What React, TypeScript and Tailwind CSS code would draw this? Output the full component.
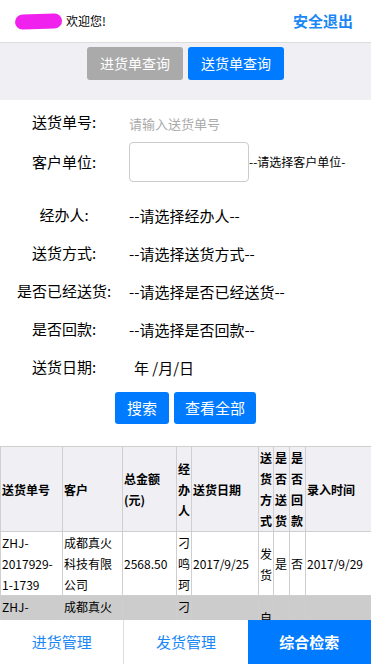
import React from "react";

const FONT = { fontFamily: '"Noto Sans CJK SC", "Liberation Sans", sans-serif' };

const FORM_ROWS = [
  { label: "经办人:", value: "--请选择经办人--" },
  { label: "送货方式:", value: "--请选择送货方式--" },
  { label: "是否已经送货:", value: "--请选择是否已经送货--" },
  { label: "是否回款:", value: "--请选择是否回款--" },
];

const COLS = [62, 60, 54, 15, 67, 15, 16, 16, 66];

const HEADERS = ["送货单号", "客户", "总金额(元)", "经办人", "送货日期", "送货方式", "是否送货", "是否回款", "录入时间"];

const ROWS = [
  ["ZHJ-2017929-1-1739", "成都真火科技有限公司", "2568.50", "刁鸣珂", "2017/9/25", "发货", "是", "否", "2017/9/29"],
  ["ZHJ-2017929-1-1740", "成都真火科技有限公司", "1320.00", "刁鸣珂", "2017/9/26", "自提", "是", "否", "2017/9/29"],
];

function FormRow({ label, children, className = "h-[38px]" }: { label: string; children: React.ReactNode; className?: string }) {
  return (
    <div className={`grid grid-cols-[128px_1fr] items-center ${className}`}>
      <div className="text-center text-[15px] text-black">{label}</div>
      <div className="min-w-0">{children}</div>
    </div>
  );
}

export default function App() {
  return (
    <div className="w-[371px] bg-white pb-[44px]" style={FONT}>
      {/* Header */}
      <div className="flex h-[43px] items-center justify-between border-b border-[#dcdcdc] bg-white pl-[15px] pr-[18px]">
        <div className="flex items-center">
          <span className="inline-block h-[15px] w-[47px] -rotate-2 rounded-full bg-[#f020ee]" />
          <span className="ml-[4px] text-[12px] text-black">欢迎您!</span>
        </div>
        <span className="text-[15px] font-bold text-[#1a87f5]">安全退出</span>
      </div>

      {/* Tabs */}
      <div className="flex h-[57px] justify-center gap-[5px] bg-[#efeff4] pt-[4px]">
        <button className="h-[33px] w-[96px] rounded-[3px] bg-[#aaaaaa] text-[14px] text-white">进货单查询</button>
        <button className="h-[33px] w-[96px] rounded-[3px] bg-[#007aff] text-[14px] text-white">送货单查询</button>
      </div>

      {/* Form */}
      <div className="pt-[3px]">
        <FormRow label="送货单号:">
          <span className="pl-[1px] text-[13px] text-[#aaaaaa]">请输入送货单号</span>
        </FormRow>
        <FormRow label="客户单位:" className="mb-[13px] h-[42px]">
          <div className="flex items-center whitespace-nowrap">
            <div className="ml-[1px] h-[40px] w-[120px] shrink-0 rounded-[4px] border border-[#cccccc]" />
            <span className="overflow-hidden text-[12px] text-black">--请选择客户单位-</span>
          </div>
        </FormRow>
        {FORM_ROWS.map((r) => (
          <FormRow key={r.label} label={r.label}>
            <span className="pl-[1px] text-[15px] text-black">{r.value}</span>
          </FormRow>
        ))}
        <FormRow label="送货日期:">
          <span className="pl-[6px] text-[15px] text-black">年 /月/日</span>
        </FormRow>
        <div className="mt-[6px] mb-[22px] flex justify-center gap-[5px]">
          <button className="h-[32px] w-[54px] rounded-[3px] bg-[#007aff] text-[15px] text-white">搜索</button>
          <button className="h-[32px] w-[82px] rounded-[3px] bg-[#007aff] text-[15px] text-white">查看全部</button>
        </div>
      </div>

      {/* Table */}
      <table className="w-[371px] table-fixed border-collapse text-[12px] leading-[21px] text-black">
        <colgroup>
          {COLS.map((w, i) => (
            <col key={i} style={{ width: w }} />
          ))}
        </colgroup>
        <thead>
          <tr className="bg-[#efeff4]">
            {HEADERS.map((h) => (
              <th key={h} className="border border-[#cfcfcf] px-[1px] text-left align-middle font-bold break-words">
                {h}
              </th>
            ))}
          </tr>
        </thead>
        <tbody>
          {ROWS.map((row, i) => (
            <tr key={i} className={i % 2 === 1 ? "bg-[#cccccc]" : "bg-white"}>
              {row.map((c, j) => (
                <td key={j} className="border border-[#cfcfcf] px-[1px] align-middle break-words">
                  {c}
                </td>
              ))}
            </tr>
          ))}
        </tbody>
      </table>

      {/* Bottom nav */}
      <div className="fixed bottom-0 left-0 flex h-[44px] w-[371px] bg-white text-[15px]">
        <div className="flex flex-1 items-center justify-center border-r border-[#dddddd] text-[#1a87f5]">进货管理</div>
        <div className="flex flex-1 items-center justify-center text-[#1a87f5]">发货管理</div>
        <div className="flex flex-1 items-center justify-center bg-[#007aff] font-bold text-white">综合检索</div>
      </div>
    </div>
  );
}
